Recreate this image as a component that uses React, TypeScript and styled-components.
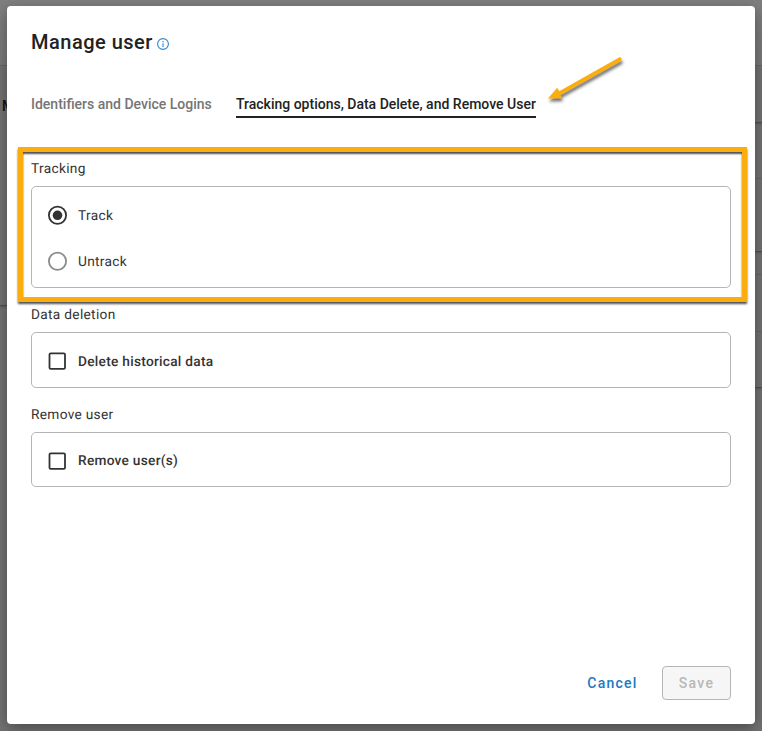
import React from "react";
import styled, { createGlobalStyle, css } from "styled-components";

const GlobalStyle = createGlobalStyle`
  *, *::before, *::after { box-sizing: border-box; }
  body { margin: 0; font-family: Roboto, "Liberation Sans", sans-serif; color: #333; }
`;

const Backdrop = styled.div`
  position: relative;
  width: 762px;
  height: 731px;
  padding: 6px 7px 7px;
  overflow: hidden;
  background: linear-gradient(#7f7f7f 0, #7a7a7a 65px, #737373 66px, #737373 100%);
`;

const PageRule = styled.span<{ $side: "left" | "right"; $top: number; $strong?: boolean }>`
  position: absolute;
  ${(p) => p.$side}: 0;
  top: ${(p) => p.$top}px;
  width: 7px;
  height: 1px;
  background: ${(p) => (p.$strong ? "#505050" : "#676767")};
  ${(p) => p.$strong && css`box-shadow: 0 1px 2px #555;`}
`;

const PageText = styled.span`
  position: absolute;
  left: 2px;
  top: 98px;
  font-size: 14px;
  line-height: 16px;
  font-weight: 500;
  color: #111;
`;

const Dialog = styled.main`
  position: relative;
  display: flex;
  flex-direction: column;
  height: 718px;
  padding: 24px;
  border-radius: 4px;
  background: #fff;
  box-shadow: 0 5px 16px rgba(0, 0, 0, 0.36);
`;

const Title = styled.h1`
  display: flex;
  align-items: center;
  gap: 4px;
  margin: 0;
  height: 24px;
  font-size: 20px;
  line-height: 24px;
  font-weight: 500;
  letter-spacing: 0.5px;
  color: #222;
  svg { margin-top: 4px; }
`;

const Tabs = styled.nav`
  display: flex;
  gap: 24px;
  height: 24px;
  margin-top: 40px;
`;

const Tab = styled.button<{ $active?: boolean; $width: number }>`
  width: ${(p) => p.$width}px;
  padding: 0 0 4px;
  border: 0;
  border-bottom: 2px solid ${(p) => (p.$active ? "#222" : "transparent")};
  background: none;
  font: 500 14px/20px Roboto, sans-serif;
  letter-spacing: 0;
  text-align: left;
  white-space: nowrap;
  color: ${(p) => (p.$active ? "#222" : "#757575")};
`;

const Sections = styled.div`
  display: flex;
  flex-direction: column;
  gap: 16px;
  margin-top: 40px;
`;

const Section = styled.section`
  position: relative;
`;

const SectionLabel = styled.h2`
  margin: 0 0 6px;
  font-size: 13.7px;
  line-height: 22px;
  font-weight: 400;
  letter-spacing: 0.31px;
  text-rendering: geometricPrecision;
`;

const Panel = styled.div<{ $height: number }>`
  display: flex;
  flex-direction: column;
  justify-content: center;
  gap: 22px;
  height: ${(p) => p.$height}px;
  padding: 2px 16px 0;
  border: 1px solid #b5b5b5;
  border-radius: 5px;
`;

const Option = styled.label<{ $strong?: boolean }>`
  display: flex;
  align-items: center;
  gap: 11px;
  height: 24px;
  font-size: 13.7px;
  line-height: 20px;
  font-weight: ${(p) => (p.$strong ? 500 : 400)};
  letter-spacing: ${(p) => (p.$strong ? 0.27 : 0.31)}px;
  text-rendering: geometricPrecision;
`;

const OptionText = styled.span`
  padding-top: 2px;
`;

const Highlight = styled.div`
  position: absolute;
  inset: -11px -16px -14px -13px;
  border: 5px solid #faad0c;
  box-shadow: 0 2px 2px #505058, inset 0 2px 2px #505058;
  pointer-events: none;
`;

const Arrow = styled.svg`
  position: absolute;
  left: 537px;
  top: 46px;
  overflow: visible;
`;

const Footer = styled.footer`
  display: flex;
  justify-content: flex-end;
  margin-top: auto;
`;

const Button = styled.button<{ $outlined?: boolean }>`
  height: 34px;
  width: ${(p) => (p.$outlined ? 69 : 99)}px;
  padding: 0;
  border: 1px solid ${(p) => (p.$outlined ? "#b5b5b5" : "transparent")};
  border-radius: 4px;
  background: ${(p) => (p.$outlined ? "#f6f6f6" : "transparent")};
  color: ${(p) => (p.$outlined ? "#b8b8b8" : "#2079c3")};
  font: 500 14px/20px Roboto, sans-serif;
  letter-spacing: 1.25px;
`;

const RadioIcon = ({ checked }: { checked?: boolean }) => (
  <svg width="19" height="20" viewBox="0 0 19 20" overflow="visible">
    <circle cx="9.5" cy="10.3" r="8.6" fill="none" stroke={checked ? "#333" : "#8b8b8b"} strokeWidth="1.8" />
    {checked && <circle cx="9.5" cy="10.3" r="4.8" fill="#333" />}
  </svg>
);

const CheckboxIcon = () => (
  <svg width="19" height="20" viewBox="0 0 19 20">
    <rect x="1.5" y="2.4" width="15.5" height="15.5" rx="1.2" fill="none" stroke="#333" strokeWidth="1.8" />
  </svg>
);

const rules = [
  { side: "left", top: 65 },
  { side: "left", top: 305, strong: true },
  { side: "right", top: 65 },
  { side: "right", top: 122, strong: true },
  { side: "right", top: 178 },
  { side: "right", top: 251, strong: true },
  { side: "right", top: 274 },
  { side: "right", top: 331 },
  { side: "right", top: 387, strong: true },
] as const;

export default function App() {
  return (
    <>
      <GlobalStyle />
      <Backdrop>
        {rules.map((r) => (
          <PageRule key={r.side + r.top} $side={r.side} $top={r.top} $strong={"strong" in r} />
        ))}
        <PageText>M</PageText>
        <Dialog>
          <Title>
            Manage user
            <svg width="12" height="12" viewBox="0 0 12 12" fill="none" stroke="#2e86d1">
              <circle cx="6" cy="6" r="5.4" strokeWidth="1.1" />
              <path d="M6 5.2V8.9M6 3V4.2" strokeWidth="1.1" />
            </svg>
          </Title>
          <Tabs>
            <Tab $width={181}>Identifiers and Device Logins</Tab>
            <Tab $active $width={300}>Tracking options, Data Delete, and Remove User</Tab>
          </Tabs>
          <Arrow width="84" height="60" viewBox="0 0 84 60">
            <defs>
              <filter id="arrowShadow" x="-20%" y="-20%" width="140%" height="160%">
                <feDropShadow dx="1" dy="3" stdDeviation="1.5" floodColor="#333" floodOpacity="0.7" />
              </filter>
            </defs>
            <path
              d="M75.5 5.2L15.2 39.2L13.2 35.8L4 46.5L18 46.2L16.4 42.9L77.4 8.8Q78.3 5.1 75.5 5.2Z"
              fill="#faad0c"
              filter="url(#arrowShadow)"
            />
          </Arrow>
          <Sections>
            <Section>
              <SectionLabel>Tracking</SectionLabel>
              <Panel $height={102}>
                <Option><RadioIcon checked /><OptionText>Track</OptionText></Option>
                <Option><RadioIcon /><OptionText>Untrack</OptionText></Option>
              </Panel>
              <Highlight />
            </Section>
            <Section>
              <SectionLabel>Data deletion</SectionLabel>
              <Panel $height={56}>
                <Option $strong><CheckboxIcon /><OptionText>Delete historical data</OptionText></Option>
              </Panel>
            </Section>
            <Section>
              <SectionLabel>Remove user</SectionLabel>
              <Panel $height={55}>
                <Option $strong><CheckboxIcon />Remove user(s)</Option>
              </Panel>
            </Section>
          </Sections>
          <Footer>
            <Button>Cancel</Button>
            <Button $outlined disabled>Save</Button>
          </Footer>
        </Dialog>
      </Backdrop>
    </>
  );
}
